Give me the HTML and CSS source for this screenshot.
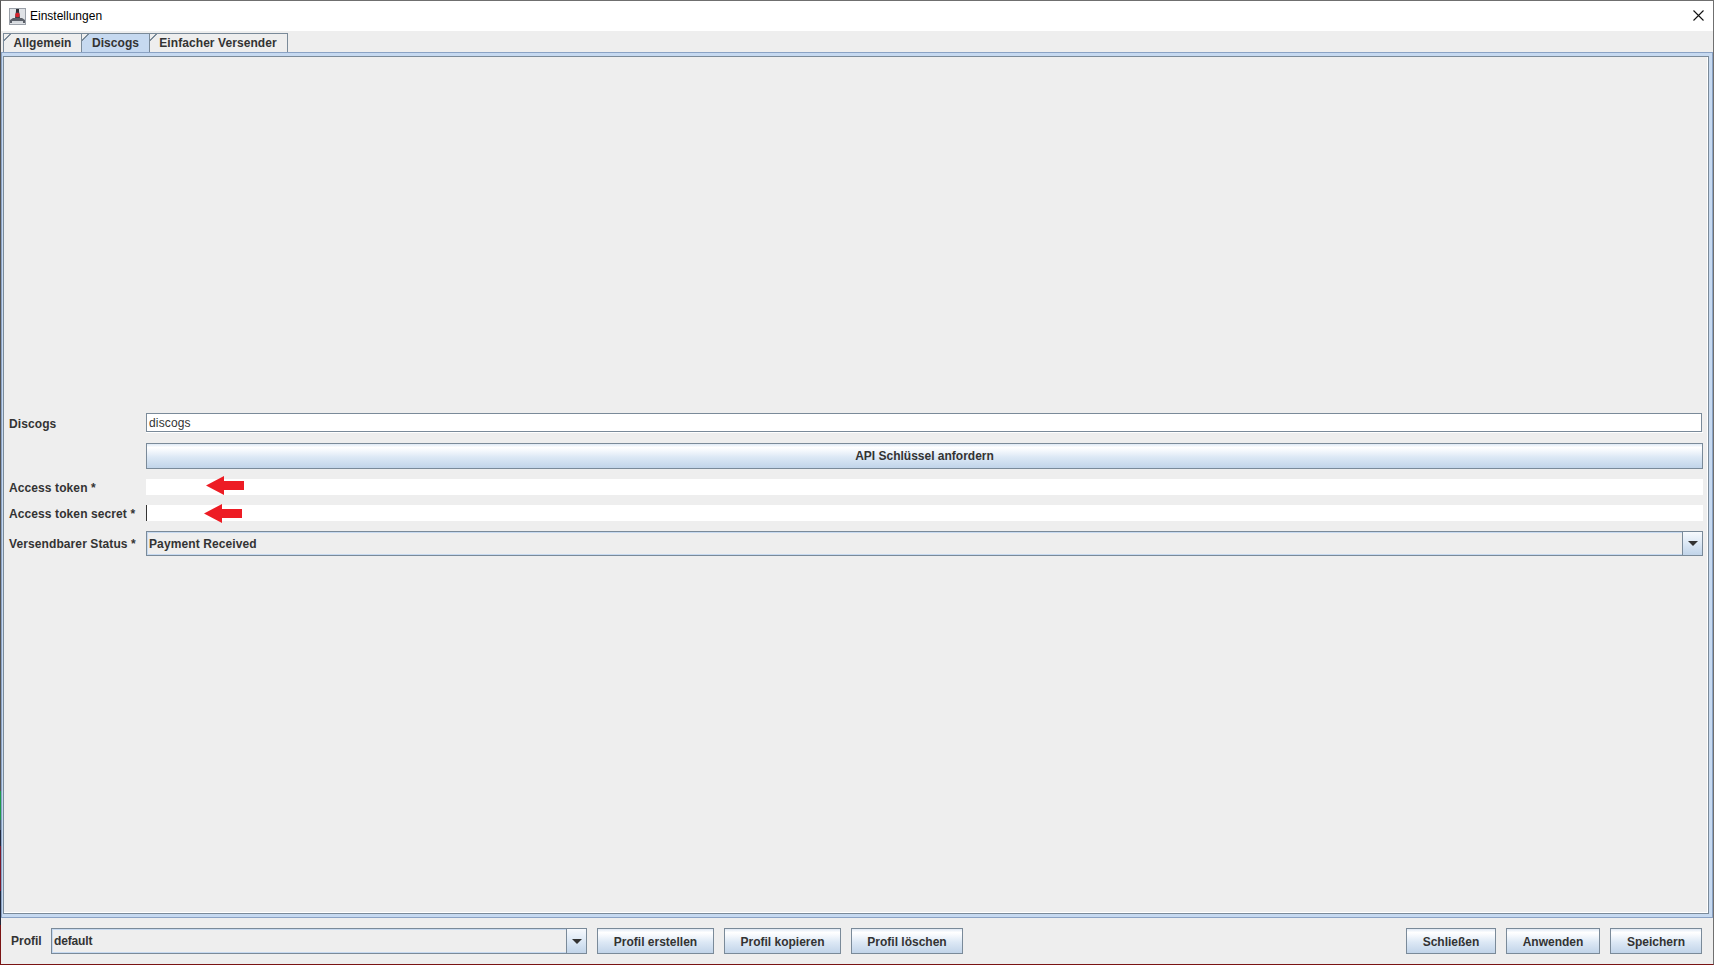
FILE: index.html
```html
<!DOCTYPE html>
<html lang="de">
<head>
<meta charset="utf-8">
<title>Einstellungen</title>
<link rel="stylesheet" href="styles.css">
</head>
<body>
<div class="window">
  <header class="titlebar">
    <svg class="app-icon" width="17" height="17" viewBox="0 0 17 17">
      <rect x="0.5" y="0.5" width="16" height="16" fill="#dfe2e6" stroke="#9aa0a8"/>
      <path d="M1 15 V12 L4 10 H13 L16 12 V15 Z" fill="#5a5f68"/>
      <path d="M3 15 V13 H14 V15 Z" fill="#d4d8dd"/>
      <path d="M6 10 L7 3 H10 L11 10 Z" fill="#3b3e45"/>
      <rect x="7" y="1" width="3" height="3" fill="#2e3036"/>
      <circle cx="8.5" cy="7" r="2.3" fill="#d8202a"/>
    </svg>
    <span class="title-text">Einstellungen</span>
    <svg class="close-icon" width="11" height="11" viewBox="0 0 11 11">
      <path d="M0.5 0.5 L10.5 10.5 M10.5 0.5 L0.5 10.5" stroke="#111" stroke-width="1.1" fill="none"/>
    </svg>
  </header>

  <nav class="tabstrip">
    <div class="tab tab-first">Allgemein</div>
    <div class="tab tab-active">Discogs</div>
    <div class="tab tab-last">Einfacher Versender</div>
  </nav>

  <main class="tabpane">
    <div class="pane-inner">
      <form class="form">
        <label class="label">Discogs</label>
        <div class="field-wrap"><div class="textfield">discogs</div></div>

        <span class="spacer"></span>
        <button type="button" class="btn btn-wide">API Schlüssel anfordern</button>

        <label class="label">Access token *</label>
        <div class="blank-field">
          <svg class="red-arrow" width="38" height="19" viewBox="0 0 38 19"><path d="M0 9.5 L18 0 V5 H38 V14 H18 V19 Z" fill="#ed1c24"/></svg>
        </div>

        <label class="label">Access token secret *</label>
        <div class="blank-field has-caret">
          <svg class="red-arrow arrow-two" width="38" height="19" viewBox="0 0 38 19"><path d="M0 9.5 L18 0 V5 H38 V14 H18 V19 Z" fill="#ed1c24"/></svg>
        </div>

        <label class="label">Versendbarer Status *</label>
        <div class="combo combo-status">
          <span class="combo-value">Payment Received</span>
          <span class="combo-arrow"><i class="triangle"></i></span>
        </div>
      </form>
    </div>
  </main>

  <footer class="footer">
    <span class="profil-label">Profil</span>
    <div class="combo combo-profile">
      <span class="combo-value combo-value-tight">default</span>
      <span class="combo-arrow"><i class="triangle"></i></span>
    </div>
    <button type="button" class="btn w-117">Profil erstellen</button>
    <button type="button" class="btn w-117">Profil kopieren</button>
    <button type="button" class="btn w-112">Profil löschen</button>
    <span class="grow"></span>
    <button type="button" class="btn w-90">Schließen</button>
    <button type="button" class="btn w-94">Anwenden</button>
    <button type="button" class="btn w-92">Speichern</button>
  </footer>
</div>
</body>
</html>
```
FILE: styles.css
```css
* { box-sizing: border-box; }
html, body { margin: 0; padding: 0; }
body {
  width: 1714px;
  height: 965px;
  overflow: hidden;
  background: #eeeeee;
  font-family: "Liberation Sans", Arial, sans-serif;
  font-size: 12px;
  color: #333333;
}
.window {
  position: relative;
  width: 1714px;
  height: 965px;
  display: flex;
  flex-direction: column;
  background: #eeeeee;
  border-top: 1px solid #6f6f6f;
  border-bottom: 1px solid #7a1414;
  border-right: 1px solid #6f6f6f;
  border-left: 1px solid #555555;
}
.window::before {
  content: "";
  position: absolute;
  left: -1px;
  top: 790px;
  width: 1px;
  height: 174px;
  background: linear-gradient(180deg,
    #1d9a4a 0, #1d9a4a 29px,
    #4a5a6a 29px, #4a5a6a 39px,
    #22283a 39px, #22283a 55px,
    #7a1a2a 55px, #7a1a2a 100px,
    #22283a 100px, #22283a 134px,
    #7a1414 134px);
}
.titlebar {
  flex: 0 0 30px;
  display: flex;
  align-items: center;
  background: #ffffff;
  padding: 0 9px 0 8px;
}
.app-icon { flex: none; }
.title-text {
  margin-left: 4px;
  font-size: 12px;
  color: #000000;
}
.close-icon { margin-left: auto; margin-bottom: 2px; }
.tabstrip {
  flex: 0 0 21px;
  display: flex;
  align-items: flex-end;
  padding-left: 2px;
}
.tab {
  height: 19px;
  border: 1px solid #7a8a99;
  border-bottom: none;
  border-left: none;
  display: flex;
  align-items: center;
  justify-content: center;
  font-weight: 700;
  letter-spacing: 0.07px;
  background: linear-gradient(135deg, #eeeeee 0, #eeeeee 4px, #7a8a99 4px, #7a8a99 5px, #eeeeee 5px);
}
.tab-first { width: 79px; border-left: 1px solid #7a8a99; }
.tab-active { width: 68px; background: linear-gradient(135deg, #eeeeee 0, #eeeeee 4px, #7a8a99 4px, #7a8a99 5px, #c6d9f0 5px); }
.tab-last { width: 138px; padding-right: 1px; }
.tabpane {
  flex: 0 0 866px;
  display: flex;
  border: 1px solid #8aa2c4;
  padding: 3px 3px 3px 1px;
  background: #c6d9f0;
}
.pane-inner {
  flex: 1;
  display: flex;
  flex-direction: column;
  justify-content: center;
  background: #eeeeee;
  border: 1px solid #7a8a99;
  box-shadow: inset -1px -1px 0 #ffffff;
}
.form {
  display: grid;
  grid-template-columns: 137px 1557px;
  grid-template-rows: 20px 26px 16px 16px 25px;
  row-gap: 10px;
  align-items: center;
  padding-left: 5px;
  margin-bottom: 2px;
}
.label {
  height: 16px;
  line-height: 18px;
  font-weight: 700;
  letter-spacing: 0.1px;
  white-space: nowrap;
}
.spacer { display: block; }
.field-wrap {
  height: 20px;
  background: linear-gradient(180deg, transparent 19px, #ffffff 19px);
}
.textfield {
  height: 19px;
  width: 1556px;
  background: #ffffff;
  border: 1px solid #7a8a99;
  padding-left: 2px;
  line-height: 19px;
  letter-spacing: 0.15px;
}
.btn {
  display: inline-flex;
  align-items: center;
  justify-content: center;
  height: 26px;
  padding: 1px 0 0;
  border: 1px solid #7a8a99;
  background: linear-gradient(180deg, #dfe9f5 0%, #ffffff 14%, #f6f9fd 26%, #dce8f5 55%, #c1d4e9 100%);
  font-family: "Liberation Sans", Arial, sans-serif;
  font-size: 12px;
  font-weight: 700;
  letter-spacing: 0;
  color: #333333;
}
.btn-wide { width: 1557px; }
.blank-field {
  position: relative;
  height: 16px;
  background: #ffffff;
}
.has-caret { border-left: 1px solid #333333; }
.red-arrow { position: absolute; left: 60px; top: -3px; }
.arrow-two { left: 57px; top: -1px; }
.combo {
  display: flex;
  align-items: stretch;
  height: 26px;
  border: 1px solid #7a8a99;
  box-shadow: inset 0 0 0 1px #c6d9f0;
  background: #eeeeee;
}
.combo-status { height: 25px; }
.combo-value {
  flex: 1;
  display: flex;
  align-items: center;
  padding: 1px 0 0 2px;
  font-weight: 700;
  letter-spacing: 0.1px;
}
.combo-value-tight { letter-spacing: -0.15px; padding: 0 0 1px 2px; }
.combo-arrow {
  flex: none;
  width: 20px;
  display: flex;
  align-items: center;
  justify-content: center;
  border-left: 1px solid #7a8a99;
  background: linear-gradient(180deg, #f6f9fd 0%, #dce8f5 50%, #c1d4e9 100%);
}
.triangle {
  display: block;
  width: 0;
  height: 0;
  border-left: 5px solid transparent;
  border-right: 5px solid transparent;
  border-top: 5px solid #333333;
}
.footer {
  flex: 1;
  display: flex;
  align-items: flex-start;
  gap: 10px;
  padding: 10px 11px 0 10px;
}
.profil-label { width: 30px; line-height: 27px; font-weight: 700; }
.combo-profile { width: 536px; }
.grow { flex: 1; }
.w-117 { width: 117px; }
.w-112 { width: 112px; }
.w-90 { width: 90px; }
.w-94 { width: 94px; }
.w-92 { width: 92px; }
```
